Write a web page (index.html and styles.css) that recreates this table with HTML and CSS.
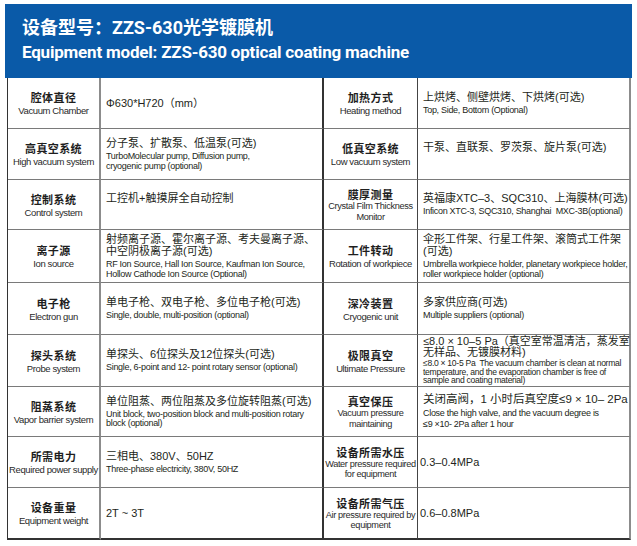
FILE: index.html
```html
<!DOCTYPE html>
<html lang="zh-CN">
<head>
<meta charset="utf-8">
<title>ZZS-630</title>
<link rel="stylesheet" href="styles.css">
</head>
<body>
<header class="banner">
  <h1 class="title-cn">设备型号：ZZS-630光学镀膜机</h1>
  <p class="title-en">Equipment model: ZZS-630 optical coating machine</p>
</header>
<div class="spec">
  <div class="label"><span class="lc">腔体直径</span><span class="le">Vacuum Chamber</span></div>
  <div class="value"><span class="vc">Φ630*H720（mm）</span></div>
  <div class="label"><span class="lc">加热方式</span><span class="le">Heating method</span></div>
  <div class="value"><span class="vc">上烘烤、侧壁烘烤、下烘烤(可选)</span><span class="ve">Top, Side, Bottom (Optional)</span></div>

  <div class="label"><span class="lc">高真空系统</span><span class="le">High vacuum system</span></div>
  <div class="value"><span class="vc">分子泵、扩散泵、低温泵(可选)</span><span class="ve">TurboMolecular pump, Diffusion pump,<br>cryogenic pump (optional)</span></div>
  <div class="label"><span class="lc">低真空系统</span><span class="le">Low vacuum system</span></div>
  <div class="value top"><span class="vc">干泵、直联泵、罗茨泵、旋片泵(可选)</span></div>

  <div class="label"><span class="lc">控制系统</span><span class="le">Control system</span></div>
  <div class="value top"><span class="vc">工控机+触摸屏全自动控制</span></div>
  <div class="label"><span class="lc">膜厚测量</span><span class="le near">Crystal Film Thickness<br>Monitor</span></div>
  <div class="value"><span class="vc">英福康XTC–3、SQC310、上海膜林(可选)</span><span class="ve">Inficon XTC-3, SQC310, Shanghai&nbsp; MXC-3B(optional)</span></div>

  <div class="label"><span class="lc">离子源</span><span class="le">Ion source</span></div>
  <div class="value"><span class="vc">射频离子源、霍尔离子源、考夫曼离子源、<br>中空阴极离子源(可选)</span><span class="ve">RF Ion Source, Hall Ion Source, Kaufman Ion Source,<br>Hollow Cathode Ion Source (Optional)</span></div>
  <div class="label"><span class="lc">工件转动</span><span class="le">Rotation of workpiece</span></div>
  <div class="value"><span class="vc">伞形工件架、行星工件架、滚筒式工件架<br>(可选)</span><span class="ve">Umbrella workpiece holder, planetary workpiece holder,<br>roller workpiece holder (optional)</span></div>

  <div class="label"><span class="lc">电子枪</span><span class="le">Electron gun</span></div>
  <div class="value"><span class="vc">单电子枪、双电子枪、多位电子枪(可选)</span><span class="ve">Single, double, multi-position (optional)</span></div>
  <div class="label"><span class="lc">深冷装置</span><span class="le">Cryogenic unit</span></div>
  <div class="value"><span class="vc">多家供应商(可选)</span><span class="ve">Multiple suppliers (optional)</span></div>

  <div class="label"><span class="lc">探头系统</span><span class="le">Probe system</span></div>
  <div class="value"><span class="vc">单探头、6位探头及12位探头(可选)</span><span class="ve">Single, 6-point and 12- point rotary sensor (optional)</span></div>
  <div class="label"><span class="lc">极限真空</span><span class="le">Ultimate Pressure</span></div>
  <div class="value"><span class="vc dense">≤8.0 × 10–5 Pa（真空室常温清洁，蒸发室<br>无样品、无镀膜材料)</span><span class="ve tight">≤8.0 × 10-5 Pa&nbsp; The vacuum chamber is clean at normal<br>temperature, and the evaporation chamber is free of<br>sample and coating material)</span></div>

  <div class="label"><span class="lc">阻蒸系统</span><span class="le">Vapor barrier system</span></div>
  <div class="value"><span class="vc">单位阻蒸、两位阻蒸及多位旋转阻蒸(可选)</span><span class="ve">Unit block, two-position block and multi-position rotary<br>block (optional)</span></div>
  <div class="label"><span class="lc">真空保压</span><span class="le near">Vacuum pressure<br>maintaining</span></div>
  <div class="value"><span class="vc big">关闭高阀，1 小时后真空度≤9 × 10– 2Pa</span><span class="ve loose">Close the high valve, and the vacuum degree is<br>≤9 ×10- 2Pa after 1 hour</span></div>

  <div class="label"><span class="lc">所需电力</span><span class="le">Required power supply</span></div>
  <div class="value"><span class="vc">三相电、380V、50HZ</span><span class="ve">Three-phase electricity, 380V, 50HZ</span></div>
  <div class="label"><span class="lc">设备所需水压</span><span class="le near">Water pressure required<br>for equipment</span></div>
  <div class="value flush"><span class="vc">0.3–0.4MPa</span></div>

  <div class="label"><span class="lc">设备重量</span><span class="le">Equipment weight</span></div>
  <div class="value"><span class="vc">2T ~ 3T</span></div>
  <div class="label"><span class="lc">设备所需气压</span><span class="le near">Air pressure required by<br>equipment</span></div>
  <div class="value flush"><span class="vc">0.6–0.8MPa</span></div>
</div>
</body>
</html>
```

FILE: styles.css
```css
* {
  box-sizing: border-box;
}

body {
  margin: 0;
  background: #ffffff;
  color: #231f20;
  font-family: "Liberation Sans", "Noto Sans CJK SC", sans-serif;
}

.banner {
  margin: 4px 5px 0;
  height: 74px;
  padding: 12px 0 0 17px;
  background: #0a5aa8;
  color: #ffffff;
}

.title-cn {
  margin: 0;
  font: 700 18px/24px "Roboto", "Noto Sans CJK SC", sans-serif;
}

.title-en {
  margin: 1px 0 0;
  font: 700 17px/23px "Roboto", sans-serif;
  letter-spacing: -0.2px;
}

.spec {
  display: grid;
  width: 624px;
  margin-left: 7px;
  grid-template-columns: 93px 223px 94px 213px;
  grid-template-rows: 51px 51px 50px 53px 52px 52px 50px 51px 52px;
  border-left: 1px solid #333333;
}

.label,
.value {
  display: flex;
  flex-direction: column;
  justify-content: center;
  border-right: 1px solid #444444;
  border-bottom: 1px solid #7a7a7a;
  white-space: nowrap;
}

.spec > :nth-child(4n+1) {
  border-right: 2px solid #8c8c8c;
}

.spec > :nth-child(4n+2) {
  border-right: 2px solid #333333;
}

.spec > :nth-child(4n) {
  border-right: 2px solid #8c8c8c;
}

.spec > :nth-last-child(-n+4) {
  border-bottom: 2px solid #333333;
}

.label {
  align-items: center;
  text-align: center;
}

.value {
  padding-left: 5px;
}

.value.flush {
  padding-left: 2px;
}

.value.top {
  justify-content: flex-start;
  padding-top: 12px;
}

.lc {
  font: 700 11px/14px "Noto Sans CJK SC", sans-serif;
  letter-spacing: 0.4px;
  color: #1e1e1e;
}

.le {
  margin-top: 2px;
  font-size: 9.5px;
  line-height: 10px;
  letter-spacing: -0.4px;
  color: #2a2a2a;
}

.le.near {
  margin-top: 0;
  font-size: 9.2px;
  line-height: 10.5px;
  letter-spacing: -0.35px;
}

.vc {
  font-size: 11px;
  line-height: 12px;
}

.vc.big {
  font-size: 11.5px;
}

.vc.dense {
  line-height: 11px;
}

.ve {
  margin-top: 3px;
  font-size: 9px;
  line-height: 9.5px;
  letter-spacing: -0.3px;
}

.ve.tight {
  margin-top: 1px;
  font-size: 8.6px;
  line-height: 8.6px;
}

.ve.loose {
  line-height: 11px;
}
```
